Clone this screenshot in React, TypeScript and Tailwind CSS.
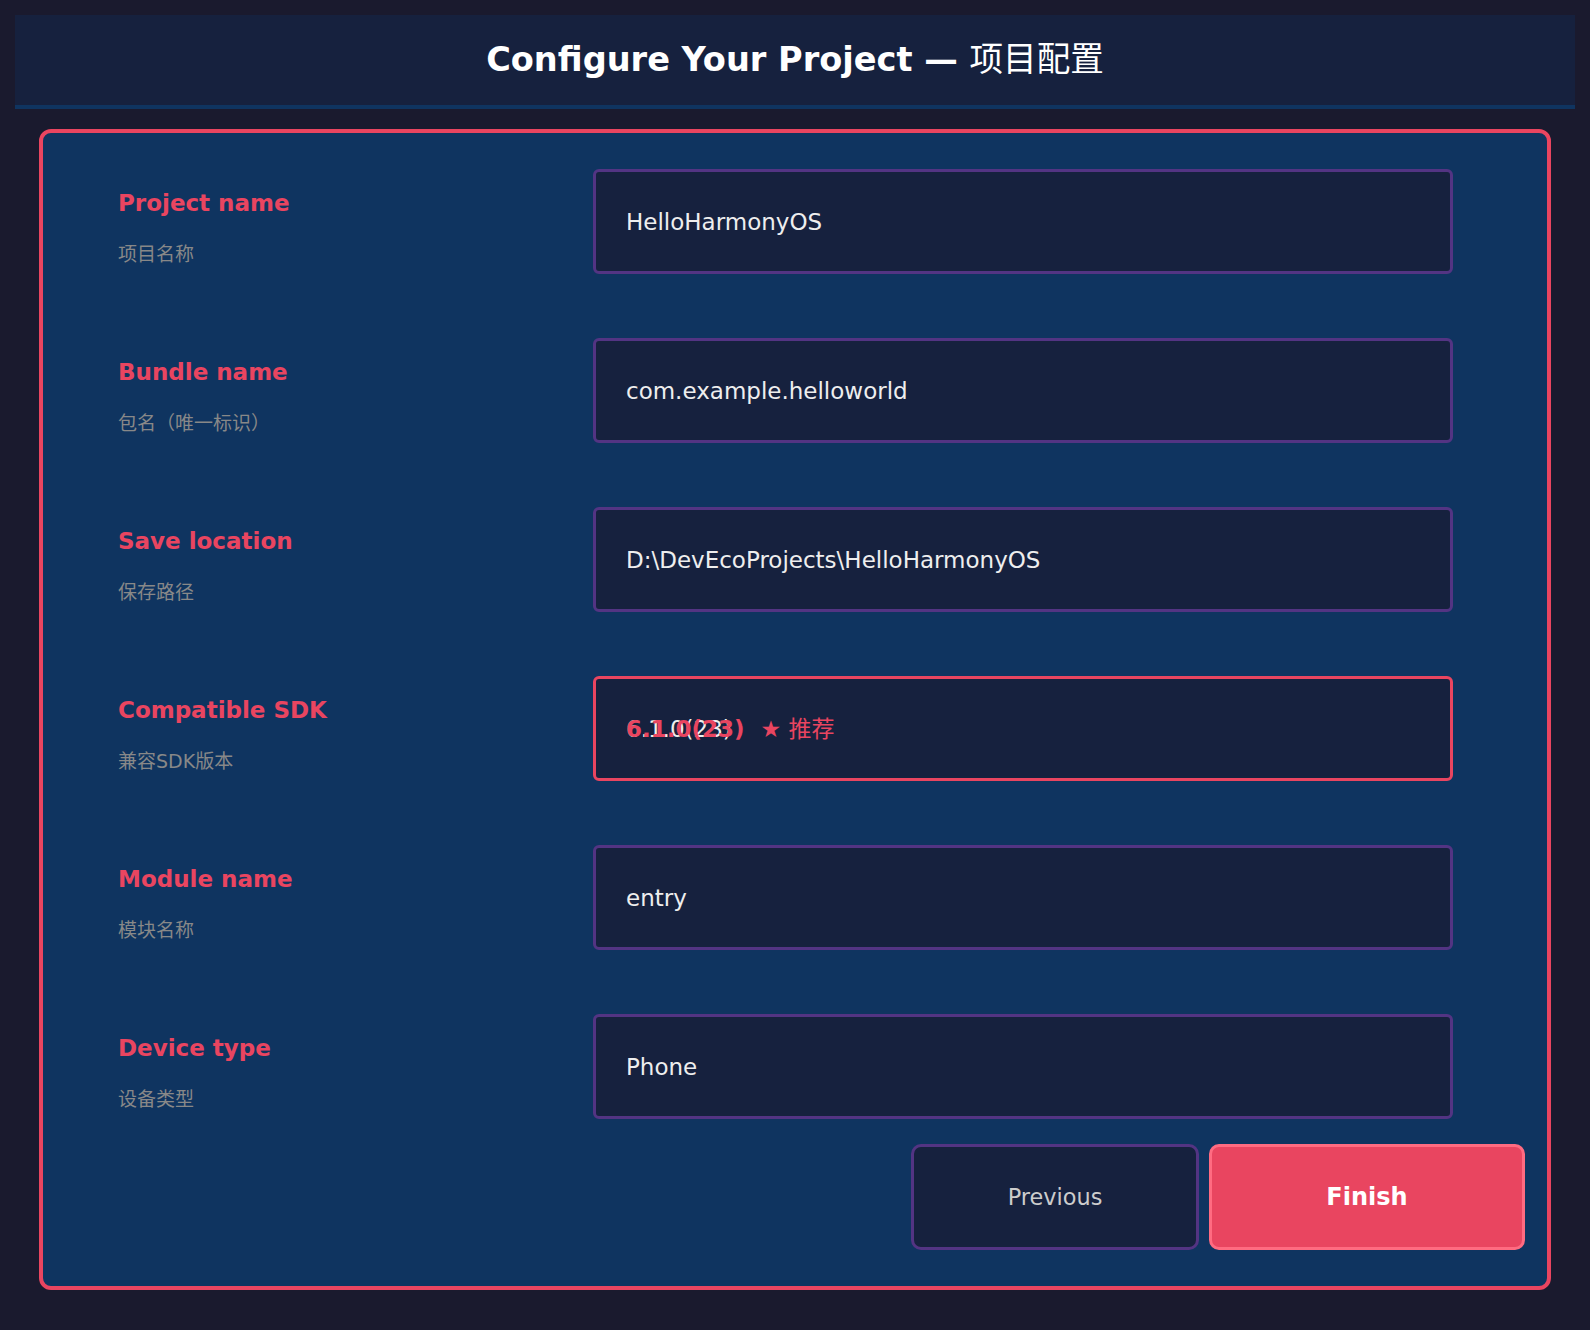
import React from "react";

type Field = {
  label: string;
  hint: string;
  value: string;
  recommended?: boolean;
};

const fields: Field[] = [
  { label: "Project name", hint: "项目名称", value: "HelloHarmonyOS" },
  { label: "Bundle name", hint: "包名（唯一标识）", value: "com.example.helloworld" },
  { label: "Save location", hint: "保存路径", value: "D:\\DevEcoProjects\\HelloHarmonyOS" },
  { label: "Compatible SDK", hint: "兼容SDK版本", value: "6.1.0(23)", recommended: true },
  { label: "Module name", hint: "模块名称", value: "entry" },
  { label: "Device type", hint: "设备类型", value: "Phone" },
];

const font = {
  fontFamily: '"DejaVu Sans", "Noto Sans CJK SC", sans-serif',
};

function FieldRow({ label, hint, value, recommended }: Field) {
  return (
    <div className="flex">
      <div className="w-[550px] pl-[75px] pt-[17px] shrink-0">
        <div className="text-[23px] leading-[1.5] font-bold text-[#e94560]">{label}</div>
        <div className="mt-[19px] text-[19px] leading-[1.5] text-[#888888]">{hint}</div>
      </div>
      <div
        className={
          "w-[860px] h-[105px] rounded-[6px] border-[3px] bg-[#16213e] flex items-center pl-[30px] " +
          (recommended ? "border-[#e94560]" : "border-[#533483]")
        }
      >
        <div className="relative text-[23px] leading-[1.5] text-[#eeeeee] whitespace-nowrap">
          {value}
          {recommended && (
            <div className="absolute left-0 top-0 flex whitespace-nowrap text-[#e94560]">
              <span className="font-bold">{value}</span>
              <span className="ml-[16px]">★ 推荐</span>
            </div>
          )}
        </div>
      </div>
    </div>
  );
}

export default function App() {
  return (
    <div className="min-h-[1330px] bg-[#1a1a2e] p-[15px]" style={font}>
      <header className="bg-[#16213e] border-b-4 border-[#0f3460] py-5 text-center">
        <h1 className="text-[33.6px] leading-[1.5] font-bold text-white">
          Configure Your Project — <span className="font-normal">项目配置</span>
        </h1>
      </header>

      <main className="mx-6 mt-5 mb-6 rounded-[12px] border-4 border-[#e94560] bg-[#0f3460] pt-[36px] pb-[36px]">
        <div className="flex flex-col gap-[64px]">
          {fields.map((f) => (
            <FieldRow key={f.label} {...f} />
          ))}
        </div>

        <div className="mt-[25px] flex justify-end gap-[10px] pr-[22px]">
          <button className="w-[288px] h-[106px] rounded-[10px] border-[3px] border-[#533483] bg-[#16213e] text-[22.4px] text-[#cccccc]">
            Previous
          </button>
          <button className="w-[316px] h-[106px] rounded-[10px] border-[3px] border-[#ff6b81] bg-[#e94560] text-[24px] font-bold text-white">
            Finish
          </button>
        </div>
      </main>
    </div>
  );
}
